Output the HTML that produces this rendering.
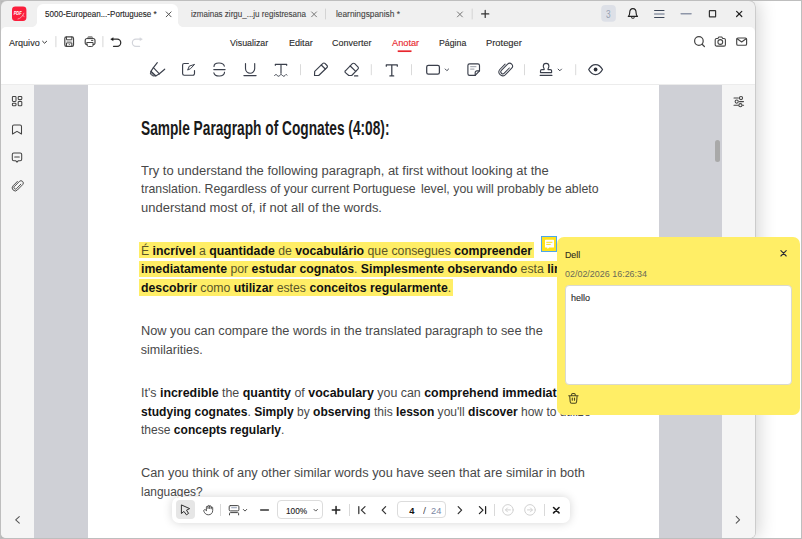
<!DOCTYPE html>
<html><head><meta charset="utf-8"><title>PDF</title>
<style>
*{box-sizing:border-box;margin:0;padding:0}
html,body{width:802px;height:539px;overflow:hidden;background:#fff}
body{position:relative;font-family:"Liberation Sans",sans-serif;color:#222}
.a{position:absolute}
.t{position:absolute;z-index:10;white-space:nowrap;font-family:"Liberation Sans",sans-serif}
.t b{font-weight:bold;color:#111}
svg{position:absolute;overflow:visible}
.sep{position:absolute;width:1px;background:#d9d9d9}
</style></head><body>
<!-- window shadow + frame -->
<div class="a" style="left:0;top:0;width:7px;height:7px;background:#bdbdbd"></div>
<div class="a" style="left:0;top:532px;width:7px;height:7px;background:#bdbdbd"></div>
<div class="a" style="left:1px;top:1px;width:754px;height:537px;background:#f0f0f0;border-radius:6px 6px 5px 5px;box-shadow:0 0 0 .8px #c6c6c6,4px 0 18px rgba(0,0,0,.17)"></div>
<div class="a" style="left:0;top:0;width:802px;height:539px;border:1px solid #bebebe;z-index:60"></div>
<!-- title bar tab -->
<div class="a" style="left:37px;top:4px;width:141px;height:24px;background:#fff;border-radius:6px 6px 0 0"></div>
<div class="a" style="left:32px;top:22px;width:5px;height:5px;background:radial-gradient(circle at 0 0,rgba(255,255,255,0) 4.6px,#fff 5.2px)"></div>
<div class="a" style="left:178px;top:22px;width:5px;height:5px;background:radial-gradient(circle at 100% 0,rgba(255,255,255,0) 4.6px,#fff 5.2px)"></div>
<!-- menu + toolbar rows -->
<div class="a" style="left:1px;top:27px;width:754px;height:57px;background:#fff;border-radius:5px 5px 0 0"></div>
<div class="a" style="left:1px;top:84px;width:754px;height:1px;background:#ececec"></div>
<!-- content area -->
<div class="a" style="left:1px;top:85px;width:33px;height:453px;background:#f5f5f5;border-radius:0 0 0 5px"></div>
<div class="a" style="left:34px;top:85px;width:688px;height:453px;background:#cfd0d6"></div>
<div class="a" style="left:722px;top:85px;width:33px;height:453px;background:#f5f5f5;border-radius:0 0 5px 0"></div>
<!-- page -->
<div class="a" style="left:88px;top:85px;width:571px;height:453px;background:#fff"></div>
<!-- scrollbar thumb -->
<div class="a" style="left:715px;top:140px;width:5px;height:22px;background:#a9a9a9;border-radius:3px"></div>
<div class="a" style="left:139px;top:242px;width:394.500px;height:16.400px;background:#ffee66"></div>
<div class="a" style="left:139px;top:260.600px;width:470px;height:16.300px;background:#ffee66"></div>
<div class="a" style="left:139px;top:279.200px;width:313.700px;height:16.400px;background:#ffee66"></div>

<div class="t" style="left:44.9px;top:4.30px;height:20px;line-height:20px;font-size:9.2px;color:#1e1e1e;transform-origin:0 50%;-webkit-text-stroke:.12px currentColor;transform:scaleX(0.8782);">5000-European...-Portuguese *</div>
<div class="t" style="left:190.8px;top:4.30px;height:20px;line-height:20px;font-size:9.2px;color:#444;transform-origin:0 50%;-webkit-text-stroke:.12px currentColor;transform:scaleX(0.8721);">izmainas zirgu_...ju registresana</div>
<div class="t" style="left:336.2px;top:4.30px;height:20px;line-height:20px;font-size:9.2px;color:#444;transform-origin:0 50%;-webkit-text-stroke:.12px currentColor;transform:scaleX(0.9064);">learningspanish *</div>
<div class="t" style="left:606.2px;top:4.80px;height:20px;line-height:20px;font-size:10.2px;color:#98a1b3;transform-origin:0 50%;transform:scaleX(0.8110);">3</div>
<div class="t" style="left:9.2px;top:33.30px;height:20px;line-height:20px;font-size:9.3px;color:#2b2b2b;transform-origin:0 50%;-webkit-text-stroke:.12px currentColor;transform:scaleX(0.9736);">Arquivo</div>
<div class="t" style="left:230.4px;top:33.30px;height:20px;line-height:20px;font-size:9.3px;color:#2b2b2b;transform-origin:0 50%;-webkit-text-stroke:.12px currentColor;transform:scaleX(0.9517);">Visualizar</div>
<div class="t" style="left:288.5px;top:33.30px;height:20px;line-height:20px;font-size:9.3px;color:#2b2b2b;transform-origin:0 50%;-webkit-text-stroke:.12px currentColor;transform:scaleX(0.9754);">Editar</div>
<div class="t" style="left:332.2px;top:33.30px;height:20px;line-height:20px;font-size:9.3px;color:#2b2b2b;transform-origin:0 50%;-webkit-text-stroke:.12px currentColor;transform:scaleX(0.9650);">Converter</div>
<div class="t" style="left:391.5px;top:33.30px;height:20px;line-height:20px;font-size:9.3px;color:#e8262d;transform-origin:0 50%;-webkit-text-stroke:.12px currentColor;transform:scaleX(0.9925);">Anotar</div>
<div class="t" style="left:438.7px;top:33.30px;height:20px;line-height:20px;font-size:9.3px;color:#2b2b2b;transform-origin:0 50%;-webkit-text-stroke:.12px currentColor;transform:scaleX(0.9429);">P&aacute;gina</div>
<div class="t" style="left:485.5px;top:33.30px;height:20px;line-height:20px;font-size:9.3px;color:#2b2b2b;transform-origin:0 50%;-webkit-text-stroke:.12px currentColor;transform:scaleX(1.0064);">Proteger</div>
<div class="t" style="left:140.8px;top:117.80px;height:20px;line-height:20px;font-size:21px;color:#1a1a1a;transform-origin:0 50%;font-weight:bold;transform-origin:0 50%;transform:scaleX(0.6532);">Sample Paragraph of Cognates (4:08):</div>
<div class="t" style="left:140.8px;top:161.30px;height:20px;line-height:20px;font-size:12.5px;color:#484848;transform-origin:0 50%;transform:scaleX(1.0379);">Try to understand the following paragraph, at first without looking at the</div>
<div class="t" style="left:140.8px;top:178.80px;height:20px;line-height:20px;font-size:12.8px;color:#484848;transform-origin:0 50%;transform:scaleX(0.9606);">translation. Regardless of your current Portuguese</div>
<div class="t" style="left:421.4px;top:179.30px;height:20px;line-height:20px;font-size:12.5px;color:#484848;transform-origin:0 50%;transform:scaleX(0.9868);">level, you will probably be ableto</div>
<div class="t" style="left:140.8px;top:198.30px;height:20px;line-height:20px;font-size:12.5px;color:#484848;transform-origin:0 50%;transform:scaleX(1.0384);">understand most of, if not all of the words.</div>
<div class="t" style="left:140.8px;top:241.30px;height:20px;line-height:20px;font-size:12.5px;color:#5a5528;transform-origin:0 50%;transform:scaleX(0.9820);">&Eacute; <b>incr&iacute;vel</b> a <b>quantidade</b> de <b>vocabul&aacute;rio</b> que consegues <b>compreender</b></div>
<div class="t" style="left:140.8px;top:259.30px;height:20px;line-height:20px;font-size:12.5px;color:#5a5528;transform-origin:0 50%;transform:scaleX(0.9827);"><b>imediatamente</b> por <b>estudar cognatos</b>. <b>Simplesmente observando</b> esta <b>linguagem</b></div>
<div class="t" style="left:140.8px;top:278.30px;height:20px;line-height:20px;font-size:12.5px;color:#5a5528;transform-origin:0 50%;transform:scaleX(0.9813);"><b>descobrir</b> como <b>utilizar</b> estes <b>conceitos regularmente</b>.</div>
<div class="t" style="left:140.8px;top:321.30px;height:20px;line-height:20px;font-size:12.5px;color:#484848;transform-origin:0 50%;transform:scaleX(1.0216);">Now you can compare the words in the translated paragraph to see the</div>
<div class="t" style="left:140.8px;top:340.30px;height:20px;line-height:20px;font-size:12.5px;color:#484848;transform-origin:0 50%;">similarities.</div>
<div class="t" style="left:140.8px;top:383.30px;height:20px;line-height:20px;font-size:12.5px;color:#484848;transform-origin:0 50%;transform:scaleX(0.9931);">It's <b>incredible</b> the <b>quantity</b> of <b>vocabulary</b> you can <b>comprehend immediately</b> by</div>
<div class="t" style="left:140.8px;top:402.30px;height:20px;line-height:20px;font-size:12.5px;color:#484848;transform-origin:0 50%;transform:scaleX(0.9637);"><b>studying cognates</b>. <b>Simply</b> by <b>observing</b> this <b>lesson</b> you'll <b>discover</b> how to utilize</div>
<div class="t" style="left:140.8px;top:420.30px;height:20px;line-height:20px;font-size:12.5px;color:#484848;transform-origin:0 50%;transform:scaleX(0.9643);">these <b>concepts regularly</b>.</div>
<div class="t" style="left:140.8px;top:463.30px;height:20px;line-height:20px;font-size:12.5px;color:#484848;transform-origin:0 50%;transform:scaleX(1.0238);">Can you think of any other similar words you have seen that are similar in both</div>
<div class="t" style="left:140.8px;top:482.30px;height:20px;line-height:20px;font-size:12.5px;color:#484848;transform-origin:0 50%;transform:scaleX(0.9527);">languages?</div>
<div class="t" style="left:565.0px;top:244.80px;height:20px;line-height:20px;font-size:9.5px;color:#2e2c1c;transform-origin:0 50%;z-index:30;-webkit-text-stroke:.12px currentColor;transform:scaleX(0.9282);">Dell</div>
<div class="t" style="left:565.0px;top:263.80px;height:20px;line-height:20px;font-size:9.5px;color:#6a6a58;transform-origin:0 50%;z-index:30;transform:scaleX(0.9407);">02/02/2026 16:26:34</div>
<div class="t" style="left:571.2px;top:287.80px;height:20px;line-height:20px;font-size:9.5px;color:#2a2a2a;transform-origin:0 50%;z-index:30;-webkit-text-stroke:.12px currentColor;transform:scaleX(0.9513);">hello</div>
<div class="t" style="left:285.8px;top:500.80px;height:20px;line-height:20px;font-size:9.4px;color:#222;transform-origin:0 50%;z-index:30;-webkit-text-stroke:.12px currentColor;transform:scaleX(0.8797);">100%</div>
<div class="t" style="left:409.3px;top:500.80px;height:20px;line-height:20px;font-size:9.4px;color:#111;transform-origin:0 50%;z-index:30;font-weight:bold;">4</div>
<div class="t" style="left:423.2px;top:500.80px;height:20px;line-height:20px;font-size:9.4px;color:#555;transform-origin:0 50%;z-index:30;transform:scaleX(1.1497);">/</div>
<div class="t" style="left:431.2px;top:500.80px;height:20px;line-height:20px;font-size:9.4px;color:#7b88a3;transform-origin:0 50%;z-index:30;transform:scaleX(0.9868);">24</div>
<!-- note marker -->
<div class="a" style="left:541.1px;top:236.1px;width:15.8px;height:15.7px;background:#ffe21c;border:1.4px solid #4da6ea;z-index:20"></div>
<!-- note popup -->
<div class="a" style="left:556.5px;top:236.5px;width:243.5px;height:178.2px;background:#ffee66;border-radius:7px;z-index:25"></div>
<div class="a" style="left:564.700px;top:285.300px;width:227px;height:99.300px;background:#fff;border:1px solid #d9d9cf;border-radius:4px;z-index:26"></div>
<!-- bottom floating toolbar -->
<div class="a" style="left:171.5px;top:496.8px;width:398px;height:26.4px;background:#fff;border-radius:7px;box-shadow:0 0 10px rgba(0,0,0,.17);z-index:25"></div>
<div class="a" style="left:176.3px;top:500.3px;width:18.5px;height:19px;background:#e6e6e6;border-radius:4px;z-index:26"></div>
<div class="a" style="left:277.3px;top:500.3px;width:46.1px;height:19px;background:#fff;border:1px solid #dcdcdc;border-radius:4px;z-index:26"></div>
<div class="a" style="left:397.4px;top:501.3px;width:49px;height:17.2px;background:#fff;border:1px solid #dcdcdc;border-radius:4px;z-index:26"></div>
<div class="sep" style="left:220px;top:504px;height:12px;z-index:26"></div>
<div class="sep" style="left:349px;top:504px;height:12px;z-index:26"></div>
<div class="sep" style="left:494px;top:504px;height:12px;z-index:26"></div>
<div class="sep" style="left:543.5px;top:504px;height:12px;z-index:26"></div>

<svg width="802" height="539" viewBox="0 0 802 539" style="left:0;top:0;z-index:5" fill="none" stroke="#333" stroke-width="1.15" stroke-linecap="round" stroke-linejoin="round">
<!-- ===== title bar ===== -->
<!-- app logo -->
<rect x="12" y="6.4" width="14.4" height="14.6" rx="3.4" fill="#fb1f3c" stroke="none"/>
<text x="13.700" y="14.900" font-family="Liberation Sans" font-size="4.700" font-weight="bold" font-style="italic" fill="#fff" stroke="none" textLength="8" lengthAdjust="spacingAndGlyphs">PDF</text>
<path d="M18 19c2.400-.5 4.600-2.400 5.900-5.800M22.400 15.300l1.700 1.100" stroke="#ffc4cc" stroke-width=".7"/>
<!-- tab close x's -->
<path d="M166.2 11.9l4.9 4.9M171.1 11.9l-4.9 4.9" stroke="#555" stroke-width="1"/>
<path d="M311.6 11.9l4.9 4.9M316.5 11.9l-4.9 4.9" stroke="#777" stroke-width="1"/>
<path d="M457.4 11.9l5 5M462.4 11.9l-5 5" stroke="#777" stroke-width="1"/>
<path d="M325.5 9v10M472.2 9v10" stroke="#d4d4d4" stroke-width="1"/>
<path d="M481.6 13.9h7.2M485.2 10.3v7.2" stroke="#333" stroke-width="1.2"/>
<!-- badge bg -->
<rect x="601.2" y="4.9" width="14.7" height="16.8" rx="4" fill="#dde0e7" stroke="none"/>
<!-- bell -->
<path d="M628.3 16.4c1.2-.9 1.4-2 1.4-3.6 0-2.600 1.300-4.200 3.200-4.200s3.200 1.600 3.200 4.200c0 1.600.2 2.700 1.400 3.600z" stroke="#222" stroke-width="1.15"/>
<path d="M631.7 17.600c.3.800 2.100.800 2.400 0" stroke="#222" stroke-width="1.1"/>
<!-- hamburger -->
<path d="M654.6 10.500h9.400M654.600 17.500h9.400" stroke="#3b4658" stroke-width="1.1"/>
<path d="M654.6 14h9.400" stroke="#8e96a6" stroke-width="1.5"/>
<!-- window controls -->
<path d="M681.200 13.800h9.800" stroke="#8e96a8" stroke-width="1.6"/>
<rect x="709.400" y="10.600" width="6.200" height="6.200" stroke="#333" stroke-width="1.2" rx=".4"/>
<path d="M736.600 11.300l5.200 5.200M741.800 11.300l-5.200 5.200" stroke="#222" stroke-width="1.2"/>
<!-- ===== menu row ===== -->
<path d="M42.600 41.300l2 1.900 2-1.900" stroke="#333" stroke-width="1"/>
<path d="M55.900 36.500v10.300M102.900 36.500v10.300" stroke="#d6d6d6" stroke-width="1"/>
<!-- save -->
<rect x="64.800" y="36.800" width="8.700" height="9.600" rx="1.600" stroke="#444" stroke-width="1.200"/>
<path d="M66.500 37v2.800h5.300v-2.800M66.500 46.200v-3.300h5.300v3.300" stroke="#444" stroke-width="1"/>
<path d="M66.600 41.300h5.100" stroke="#b5b5b5" stroke-width="1.200" stroke-linecap="butt"/>
<circle cx="69.300" cy="44.500" r=".55" fill="#444" stroke="none"/>
<!-- print -->
<path d="M87.400 38.400l.5-1.400a.7.700 0 0 1 .7-.5h3.100a.7.700 0 0 1 .7.500l.5 1.400z" fill="#9a9a9a" stroke="#777" stroke-width=".6"/>
<path d="M87 44.600h-.2a1.600 1.600 0 0 1-1.600-1.600v-2.500a2 2 0 0 1 2-2h5.800a2 2 0 0 1 2 2v2.500a1.600 1.600 0 0 1-1.600 1.600h-.2" stroke="#444" stroke-width="1.150"/>
<path d="M87.100 42.500h6v2.700a1.300 1.300 0 0 1-1.300 1.300h-3.400a1.300 1.300 0 0 1-1.300-1.300z" stroke="#444" stroke-width="1"/>
<path d="M91.500 40.400h1.400" stroke="#444" stroke-width="1"/>
<!-- undo -->
<path d="M112.400 39.200h4.800a3.550 3.550 0 0 1 0 7.100h-3.700" stroke="#2c2c2c" stroke-width="1.250"/>
<path d="M112.900 37.900l-2.200 1.300 2.200 1.300z" fill="#111" stroke="#111" stroke-width=".5"/>
<!-- redo (disabled) -->
<path d="M140.700 39.200h-4.800a3.550 3.550 0 0 0 0 7.100h3.700" stroke="#d3d5db" stroke-width="1.200"/>
<path d="M140.200 37.900l2.200 1.300-2.200 1.300z" fill="#d3d5db" stroke="#d3d5db" stroke-width=".5"/>
<!-- active underline -->
<path d="M397.700 51.200h13.800" stroke="#e8262d" stroke-width="1.700" stroke-linecap="butt"/>
<!-- search -->
<circle cx="698.900" cy="41" r="4.300" stroke="#444" stroke-width="1.200"/>
<path d="M702.100 44.300l2.300 2.200" stroke="#444" stroke-width="1.200"/>
<!-- camera -->
<path d="M716.600 38.500h1.300l.9-1.500h3l.9 1.500h1.300a1.400 1.400 0 0 1 1.400 1.400v4.800a1.400 1.400 0 0 1-1.400 1.400h-7.400a1.400 1.400 0 0 1-1.400-1.400v-4.800a1.400 1.400 0 0 1 1.400-1.400z" stroke="#444" stroke-width="1.100"/>
<circle cx="720.300" cy="42" r="2.400" stroke="#444" stroke-width="1.100"/>
<!-- mail -->
<rect x="736.700" y="38" width="9.900" height="7.200" rx="1.300" stroke="#444" stroke-width="1.150"/>
<path d="M737.200 38.700l4.450 3.300 4.450-3.300" stroke="#444" stroke-width="1.100"/>
<!-- ===== annotate toolbar ===== -->
<g stroke="#3a3f4b" stroke-width="1.150">
<!-- highlighter -->
<path d="M157.300 62.600l-3.900 5.100 6 6.100 5.300-4.600"/>
<path d="M153.400 67.700l-2.500 3.600 4.800 4.600 3.700-2.100" />
<path d="M150.900 71.300l-.6 2.700 2.700 2 2.700-.1z" fill="#3a3f4b" fill-opacity=".55" stroke-width=".9"/>
<!-- note/edit -->
<path d="M188.400 63.500h-4.200a1.600 1.600 0 0 0-1.600 1.600v8.500a1.600 1.600 0 0 0 1.600 1.600h8.700a1.600 1.600 0 0 0 1.600-1.600v-3.100"/>
<path d="M187.800 69.700l1.500-3.600 5.300-1.700-3.800 4z" stroke-width="1"/>
<!-- strikethrough S -->
<path d="M224.300 66.200c-.9-4.400-10.300-4.300-10.300.3M213.800 69.600h11.300M213.900 72.800c.9 4.400 10.800 4.300 10.600-.6"/>
<!-- underline U -->
<path d="M245.500 63.500v5.100a4.600 4.600 0 0 0 9.200 0v-5.100M243.900 75.600h12.200"/>
<!-- squiggly T -->
<path d="M275.300 65.300v-1h11.400v1M281 64.300v9"/>
<path d="M274.600 75.400c.9-1.100 1.700-1.100 2.600 0s1.700 1.100 2.600 0 1.700-1.100 2.600 0 1.700 1.100 2.600 0 1.400-1.100 2.100-.3" stroke-width="1"/>
<!-- pencil -->
<path d="M314.500 75.500l.2-4.100 8.200-8a1.400 1.400 0 0 1 2 0l2.100 2.100a1.400 1.400 0 0 1 0 2l-8.300 8z"/>
<path d="M321.300 65l4 4" />
<!-- eraser -->
<path d="M345.400 70.800l7-7.100a1.600 1.600 0 0 1 2.300 0l3.200 3.200a1.600 1.600 0 0 1 0 2.300l-6.200 6.300h-2.900l-3.400-2.900a1.200 1.200 0 0 1 0-1.800z"/>
<path d="M350.200 66l5.500 5.400M354.500 75.900h3.300"/>
<!-- text T -->
<path d="M386.300 66.200v-1.300h11v1.300M391.800 64.900v10.900M389.900 75.900h3.800" stroke-width="1.250"/>
<!-- rectangle + chevron -->
<rect x="426.700" y="65.300" width="12.700" height="8.900" rx="1.700" stroke-width="1.250"/>
<path d="M445.200 69l1.700 1.700 1.700-1.700" stroke-width=".95"/>
<!-- sticky note -->
<path d="M479.500 70.800v-5.300a1.700 1.700 0 0 0-1.700-1.700h-8.200a1.700 1.700 0 0 0-1.700 1.700v8.200a1.700 1.700 0 0 0 1.700 1.700h5.600z"/>
<path d="M475.200 75.400v-2.900a1.700 1.700 0 0 1 1.700-1.700h2.600" />
<path d="M470.600 66.700h5.400M470.600 69.100h3.400" stroke-width=".9" stroke="#8a8f9a"/>
<!-- paperclip -->
<path d="M509.300 68l-5 5.200a2 2 0 0 1-2.900-2.800l6.200-6.300a2.900 2.900 0 0 1 4.100 4.100l-6.500 6.600a3.800 3.800 0 0 1-5.400-5.300l5.300-5.400" stroke-width="1.050"/>
<!-- stamp + chevron -->
<path d="M544.200 69.600c.3-1-.9-1.700-.9-3.400a2.800 2.800 0 0 1 5.600 0c0 1.700-1.200 2.400-.9 3.400h2.300a1.300 1.300 0 0 1 1.300 1.300v1.700h-11.100v-1.700a1.300 1.300 0 0 1 1.300-1.300zM540.100 75.300h11.900"/>
<path d="M558.100 69.100l1.700 1.700 1.700-1.700" stroke-width=".95"/>
<!-- eye -->
<path d="M588.700 69.500c1.700-3.200 4.200-5 6.900-5s5.200 1.800 6.900 5c-1.700 3.200-4.200 5-6.900 5s-5.200-1.800-6.900-5z" stroke-width="1.250"/>
<circle cx="595.600" cy="69.500" r="1.900" fill="#2a2d36" stroke="none"/>
</g>
<path d="M300.500 64.600v10.200M371.300 64.600v10.200M411.500 64.600v10.200M524.500 64.600v10.200M575.700 64.600v10.200" stroke="#dadada" stroke-width="1"/>
<!-- ===== left sidebar ===== -->
<g stroke="#444" stroke-width="1.050">
<rect x="12.400" y="96.400" width="3.600" height="5" rx=".8"/><rect x="18.200" y="96.400" width="3.600" height="3.200" rx=".8"/>
<rect x="12.400" y="103.200" width="3.600" height="2.500" rx=".8"/><rect x="18.200" y="101.500" width="3.600" height="4.200" rx=".8"/>
<path d="M12.500 134v-7.600a1.500 1.500 0 0 1 1.500-1.500h6a1.500 1.500 0 0 1 1.500 1.500v7.600l-4.500-2.600z"/>
<path d="M13.800 153h6.400a1.500 1.500 0 0 1 1.500 1.500v4.700a1.500 1.500 0 0 1-1.500 1.500h-1.800l-1.400 1.500-1.400-1.500h-1.800a1.500 1.500 0 0 1-1.500-1.500v-4.700a1.500 1.500 0 0 1 1.500-1.500zM14.700 157h4.600"/>
<path d="M20.800 184.200l-4.200 4.400a1.500 1.500 0 0 1-2.200-2.100l5-5.100a2.300 2.300 0 0 1 3.300 3.200l-5.300 5.400a3 3 0 0 1-4.300-4.200l4.300-4.400" stroke-width=".95"/>
<path d="M19.300 516.600l-3.600 3.300 3.600 3.300" stroke-width="1.050" stroke="#555"/>
<path d="M736.200 516.400l3.400 3.400-3.400 3.400" stroke-width="1.050" stroke="#555"/>
<!-- settings sliders -->
<path d="M734 98h4.400M739.500 101.600h4M734 105.200h4.200M742.600 105.200h1"/>
<circle cx="741" cy="98" r="1.600"/><circle cx="736.700" cy="101.600" r="1.600"/><circle cx="740.400" cy="105.200" r="1.600"/>
</g>
</svg>
<!-- overlay-level icons -->
<svg width="802" height="539" viewBox="0 0 802 539" style="left:0;top:0;z-index:40" fill="none" stroke="#333" stroke-width="1.150" stroke-linecap="round" stroke-linejoin="round">
<!-- note marker bubble -->
<path d="M545.600 239.800h7.800a.6.600 0 0 1 .6.600v6.500a.6.600 0 0 1-.6.600h-4.300l-1.400 1.600-.5-1.600h-1.600a.6.600 0 0 1-.6-.6v-6.500a.6.600 0 0 1 .6-.6z" fill="#fff" stroke="none"/>
<path d="M546.700 242.300h5.300M546.700 244.400h3.600" stroke="#ffe01e" stroke-width="1"/>
<!-- popup close -->
<path d="M780.900 250.700l5.300 5.300M786.200 250.700l-5.300 5.300" stroke="#2a2a35" stroke-width="1.100"/>
<!-- trash -->
<g stroke="#4a4620" stroke-width="1.050">
<path d="M568.700 395.700h9.400M571.600 395.500v-.9a1.100 1.100 0 0 1 1.100-1.100h1.400a1.100 1.100 0 0 1 1.100 1.100v.9M569.700 395.900l.500 5.900a1.500 1.500 0 0 0 1.500 1.400h3.400a1.500 1.500 0 0 0 1.500-1.400l.500-5.900"/>
<path d="M572.300 398.100v2.100M574.500 398.100v2.100" stroke-width="1.100"/>
</g>
<!-- bottom toolbar icons -->
<path d="M181.400 505.300v8.200l2.500-2.100 2.500 3.400 2.200-1.400-2.100-3.200 2.800-1.400z" stroke="#2e2e2e" stroke-width="1"/>
<!-- hand -->
<path d="M206.400 510.500v-3.400a.8.800 0 0 1 1.600 0v1.500M208 507v-.8a.8.800 0 0 1 1.600 0v2.300M209.600 506.600a.8.800 0 0 1 1.600 0v2.200M211.200 507.800a.75.750 0 0 1 1.500 0v2.700c0 2.800-2 4.300-4.300 4.300s-3.600-1.300-4.600-3.600c-.6-1.400 1.300-2.300 2.500-.800" stroke="#3a3a3a" stroke-width=".85"/>
<!-- view mode -->
<rect x="229.200" y="505.600" width="9.700" height="5.300" rx="1.100" stroke="#444" stroke-width="1"/>
<path d="M231.200 507.600h5.700" stroke="#aab3c6" stroke-width="1.400" stroke-linecap="butt"/>
<path d="M229.500 514.900v-1.300a1 1 0 0 1 1-1h7.100a1 1 0 0 1 1 1v1.300" stroke="#444" stroke-width="1"/>
<path d="M243.300 509.400l1.700 1.700 1.700-1.700" stroke="#444" stroke-width=".95"/>
<path d="M260.700 510.100h7.700" stroke="#333" stroke-width="1.500"/>
<path d="M314 509.400l1.700 1.700 1.700-1.700" stroke="#444" stroke-width=".95"/>
<path d="M332.300 510.100h7.500M336.050 506.400v7.400" stroke="#222" stroke-width="1.500"/>
<path d="M358.800 506.600v7M365 506.600l-3.600 3.500 3.600 3.500" stroke="#333" stroke-width="1.250"/>
<path d="M385.600 506.600l-3.400 3.500 3.400 3.500" stroke="#333" stroke-width="1.250"/>
<path d="M458.200 506.600l3.400 3.500-3.400 3.500" stroke="#333" stroke-width="1.250"/>
<path d="M479.400 506.600l3.600 3.500-3.600 3.500M485.600 506.600v7" stroke="#222" stroke-width="1.250"/>
<g stroke="#d2d2d2" stroke-width="1">
<circle cx="507.900" cy="509.900" r="5.300"/><path d="M510.400 509.900h-4.800M507.500 507.900l-2 2 2 2"/>
<circle cx="530" cy="509.900" r="5.300"/><path d="M527.500 509.900h4.800M530.400 507.900l2 2-2 2"/>
</g>
<path d="M553.600 507.500l5.400 5.400M559 507.500l-5.400 5.400" stroke="#1c1c1c" stroke-width="1.600"/>
</svg>

</body></html>
